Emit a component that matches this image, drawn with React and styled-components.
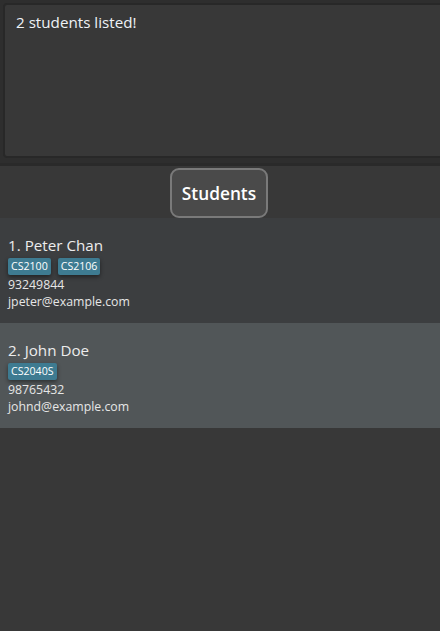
import React from "react";
import styled, { createGlobalStyle } from "styled-components";

const Global = createGlobalStyle`
  html, body { margin: 0; padding: 0; background: #383838; }
  body { font-family: "Open Sans", "Noto Sans", sans-serif; overflow: hidden; }
`;

const Page = styled.div`
  width: 440px;
  height: 631px;
  background: #383838;
  display: flex;
  flex-direction: column;
  overflow: hidden;
`;

const ResultPane = styled.div`
  background: #2e2e2e;
  padding: 3px 0 0 3px;
  height: 166px;
  box-sizing: border-box;
  border-bottom: 3px solid #2a2a2a;
`;

const ResultBox = styled.div`
  box-sizing: border-box;
  height: 155px;
  width: 460px;
  background: #383838;
  border: 2px solid #282828;
  border-radius: 4px;
  padding: 6px 11px;
  color: #eef2f6;
  font-size: 15.2px;
  line-height: 22px;
`;

const Header = styled.div`
  height: 52px;
  display: flex;
  justify-content: center;
  align-items: flex-end;
  background: #383838;
`;

const TitleButton = styled.div`
  box-sizing: border-box;
  width: 98px;
  height: 50px;
  margin-left: -2px;
  display: flex;
  align-items: center;
  justify-content: center;
  background: #4a4a4a;
  border: 2px solid #7a7a7a;
  border-radius: 9px;
  color: #ffffff;
  font-size: 17.3px;
  font-weight: 600;
`;

const List = styled.div`
  display: flex;
  flex-direction: column;
`;

const Card = styled.div`
  height: 105px;
  box-sizing: border-box;
  padding: 16px 8px 0;
  background: ${(p) => (p.$alt ? "#515658" : "#3c3e40")};
  display: flex;
  flex-direction: column;
  align-items: flex-start;
`;

const Name = styled.div`
  color: #ececec;
  font-size: 15.2px;
  line-height: 22px;
`;

const Tags = styled.div`
  display: flex;
  gap: 7px;
  margin: 2px 0 1px;
`;

const Tag = styled.span`
  background: #3e7b91;
  color: #ffffff;
  font-size: 10.6px;
  line-height: 17px;
  height: 17px;
  padding: 0 3px;
  border-radius: 2px;
  box-shadow: 0 2px 4px rgba(0, 0, 0, 0.45);
`;

const Field = styled.div`
  color: #e6e6e6;
  font-size: 12.3px;
  line-height: 17px;
`;

const students = [
  { name: "Peter Chan", tags: ["CS2100", "CS2106"], phone: "93249844", email: "jpeter@example.com" },
  { name: "John Doe", tags: ["CS2040S"], phone: "98765432", email: "johnd@example.com" },
];

export default function App() {
  return (
    <Page>
      <Global />
      <ResultPane>
        <ResultBox>2 students listed!</ResultBox>
      </ResultPane>
      <Header>
        <TitleButton>Students</TitleButton>
      </Header>
      <List>
        {students.map((s, i) => (
          <Card key={s.name} $alt={i % 2 === 1}>
            <Name>{i + 1}. {s.name}</Name>
            <Tags>
              {s.tags.map((t) => (
                <Tag key={t}>{t}</Tag>
              ))}
            </Tags>
            <Field>{s.phone}</Field>
            <Field>{s.email}</Field>
          </Card>
        ))}
      </List>
    </Page>
  );
}
